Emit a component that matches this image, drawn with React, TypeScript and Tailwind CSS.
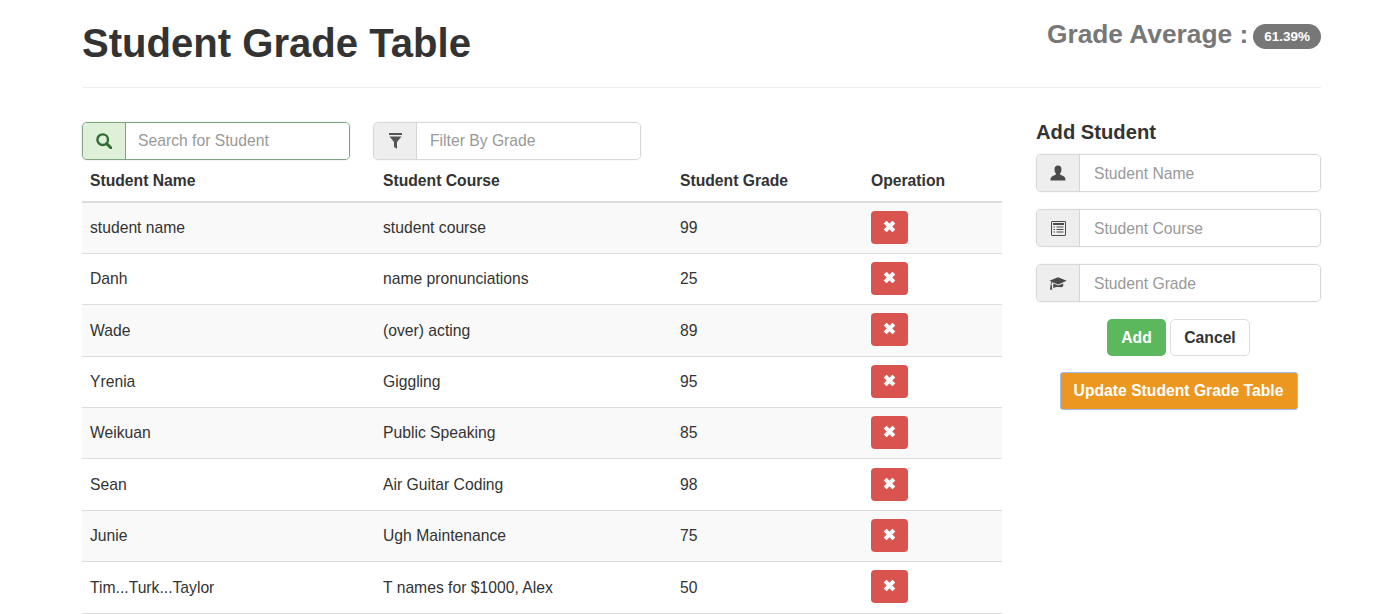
import React from 'react';

const students = [
  { name: 'student name', course: 'student course', grade: 99 },
  { name: 'Danh', course: 'name pronunciations', grade: 25 },
  { name: 'Wade', course: '(over) acting', grade: 89 },
  { name: 'Yrenia', course: 'Giggling', grade: 95 },
  { name: 'Weikuan', course: 'Public Speaking', grade: 85 },
  { name: 'Sean', course: 'Air Guitar Coding', grade: 98 },
  { name: 'Junie', course: 'Ugh Maintenance', grade: 75 },
  { name: 'Tim...Turk...Taylor', course: 'T names for $1000, Alex', grade: 50 },
];

const SearchIcon = () => (
  <svg width="16" height="16" viewBox="0 0 16 16" fill="none" stroke="#2f6b33" strokeWidth="2.4">
    <circle cx="6.7" cy="6.7" r="5.3" />
    <path d="M10.6 10.6 L14.8 14.8" strokeWidth="3" strokeLinecap="round" />
  </svg>
);

const FilterIcon = () => (
  <svg width="13" height="16" viewBox="0 0 13 16" fill="#555">
    <rect x="0" y="0" width="13" height="2" />
    <path d="M0.5 3.6 H12.5 L8 9 V15.8 L5 14 V9 Z" />
  </svg>
);

const UserIcon = () => (
  <svg width="16" height="16" viewBox="0 0 16 16" fill="#4a4a4a">
    <path d="M8 0.5 C10.3 0.5 11.5 2.2 11.5 4.4 C11.5 6.3 10.7 7.8 10 8.6 C10 9.6 10.5 10 12 10.6 C14 11.4 15.5 12.2 15.5 15.5 H0.5 C0.5 12.2 2 11.4 4 10.6 C5.5 10 6 9.6 6 8.6 C5.3 7.8 4.5 6.3 4.5 4.4 C4.5 2.2 5.7 0.5 8 0.5 Z" />
  </svg>
);

const ListIcon = () => (
  <svg width="15" height="15" viewBox="0 0 15 15" fill="none" stroke="#4a4a4a">
    <rect x="0.5" y="0.5" width="14" height="14" rx="0.5" strokeWidth="1" />
    <path d="M2 3 H13" strokeWidth="2" />
    <path d="M2.5 6 H4 M5.5 6 H12.5 M2.5 8.5 H4 M5.5 8.5 H12.5 M2.5 11 H4 M5.5 11 H12.5" strokeWidth="1.2" />
  </svg>
);

const CapIcon = () => (
  <svg width="18" height="15" viewBox="0 0 17 14" fill="#4a4a4a">
    <path d="M8.5 1 L16.8 4.4 L8.8 8 L3.2 5.8 C2.6 6.4 2.4 7.2 2.4 8.2 L1.6 8.2 C1.6 7 1.9 6 2.4 5.4 L0.4 4.4 Z" />
    <path d="M4 7 L8.8 9 L13.4 7 V9.6 C12 11 10.4 10.4 8.8 10.4 C7 10.4 5.4 10.6 4 11.6 Z" />
    <path d="M1.4 8.4 H2.6 L3 13 H1 Z" />
  </svg>
);

const RemoveIcon = () => (
  <svg className="mb-[2px]" width="13" height="13" viewBox="0 0 12 12" fill="none" stroke="#fff" strokeWidth="3.8">
    <path d="M2 2 L10 10 M10 2 L2 10" />
  </svg>
);

type GroupProps = {
  icon: React.ReactNode;
  placeholder: string;
  inputClass: string;
  addonClass?: string;
  borderClass?: string;
};

function InputGroup({ icon, placeholder, inputClass, addonClass, borderClass }: GroupProps) {
  return (
    <div className={`flex h-[38px] w-full rounded-[5px] border ${borderClass || 'border-[#d8d8d8] shadow-[0_0_1px_#ccc]'}`}>
      <span className={`flex w-[43px] shrink-0 items-center justify-center rounded-l-[4px] border-r ${addonClass || 'border-[#d5d5d5] bg-[#eee]'}`}>
        {icon}
      </span>
      <input
        placeholder={placeholder}
        className={`min-w-0 flex-1 rounded-r-[4px] bg-white text-[15.7px] text-[#555] outline-none placeholder:text-[#999] ${inputClass}`}
      />
    </div>
  );
}

export default function App() {
  return (
    <div className="h-[614px] overflow-hidden bg-white pl-[82px] pr-[79px] font-['Liberation_Sans',Arial,sans-serif] text-[15.7px] text-[#333]">
      {/* Header */}
      <div className="flex h-[88px] justify-between border-b border-[#eee]">
        <h1 className="mt-[18px] text-[40.1px] font-bold leading-[50px]">Student Grade Table</h1>
        <div className="mt-[17px] flex h-[36px] items-center text-[26.3px] font-bold text-[#777]">
          <span>Grade Average :</span>
          <span className="ml-[5px] mt-[3px] rounded-[13px] bg-[#777] px-[11px] py-[5px] text-[13.5px] leading-[15px] text-white">61.39%</span>
        </div>
      </div>

      <div className="flex">
        {/* Table column */}
        <div className="w-[920px]">
          <div className="mt-[34px] flex gap-[23px]">
            <div className="w-[268px]">
              <InputGroup
                icon={<SearchIcon />}
                placeholder="Search for Student"
                inputClass="px-[12px]"
                borderClass="border-[#7da47e] shadow-[0_0_1px_#7da47e]"
                addonClass="border-[#7da47e] bg-[#dff0d8]"
              />
            </div>
            <div className="w-[268px]">
              <InputGroup icon={<FilterIcon />} placeholder="Filter By Grade" inputClass="px-[13px]" />
            </div>
          </div>
          <table className="w-[920px] table-fixed border-collapse">
            <colgroup>
              <col className="w-[293px]" />
              <col className="w-[297px]" />
              <col className="w-[191px]" />
              <col className="w-[139px]" />
            </colgroup>
            <thead>
              <tr className="h-[42px] border-b-[2px] border-[#ddd] text-left">
                <th className="px-2 font-bold">Student Name</th>
                <th className="px-2 font-bold">Student Course</th>
                <th className="px-2 font-bold">Student Grade</th>
                <th className="px-2 font-bold">Operation</th>
              </tr>
            </thead>
            <tbody>
              {students.map((s, i) => (
                <tr key={s.name} className={`h-[51.4px] border-b border-[#ddd] ${i % 2 === 0 ? 'bg-[#f9f9f9]' : 'bg-white'}`}>
                  <td className="px-2">{s.name}</td>
                  <td className="px-2">{s.course}</td>
                  <td className="px-2">{s.grade}</td>
                  <td className="px-2">
                    <button className="mb-[1px] flex h-[33px] w-[37px] items-center justify-center rounded-[4px] bg-[#d9534f]">
                      <RemoveIcon />
                    </button>
                  </td>
                </tr>
              ))}
            </tbody>
          </table>
        </div>

        {/* Add student form */}
        <div className="ml-[34px] flex w-[285px] flex-col">
          <h4 className="mt-[31px] text-[20.2px] font-bold leading-[26px]">Add Student</h4>
          <div className="mt-[9px] flex flex-col gap-[17px]">
            <InputGroup icon={<UserIcon />} placeholder="Student Name" inputClass="px-[14px] pt-[2px]" />
            <InputGroup icon={<ListIcon />} placeholder="Student Course" inputClass="px-[14px] pt-[2px]" />
            <InputGroup icon={<CapIcon />} placeholder="Student Grade" inputClass="px-[14px] pt-[2px]" />
          </div>
          <div className="mt-[17px] flex justify-center gap-[4px]">
            <button className="h-[37px] w-[59px] rounded-[5px] bg-[#5cb85c] font-bold text-white">Add</button>
            <button className="h-[37px] w-[80px] rounded-[5px] border border-[#ddd] bg-white font-bold text-[#333]">Cancel</button>
          </div>
          <button className="mx-auto mt-[16px] h-[38px] w-[238px] rounded-[3px] border border-[#9dbcf0] bg-[#ec971f] font-bold text-white">
            Update Student Grade Table
          </button>
        </div>
      </div>
    </div>
  );
}
